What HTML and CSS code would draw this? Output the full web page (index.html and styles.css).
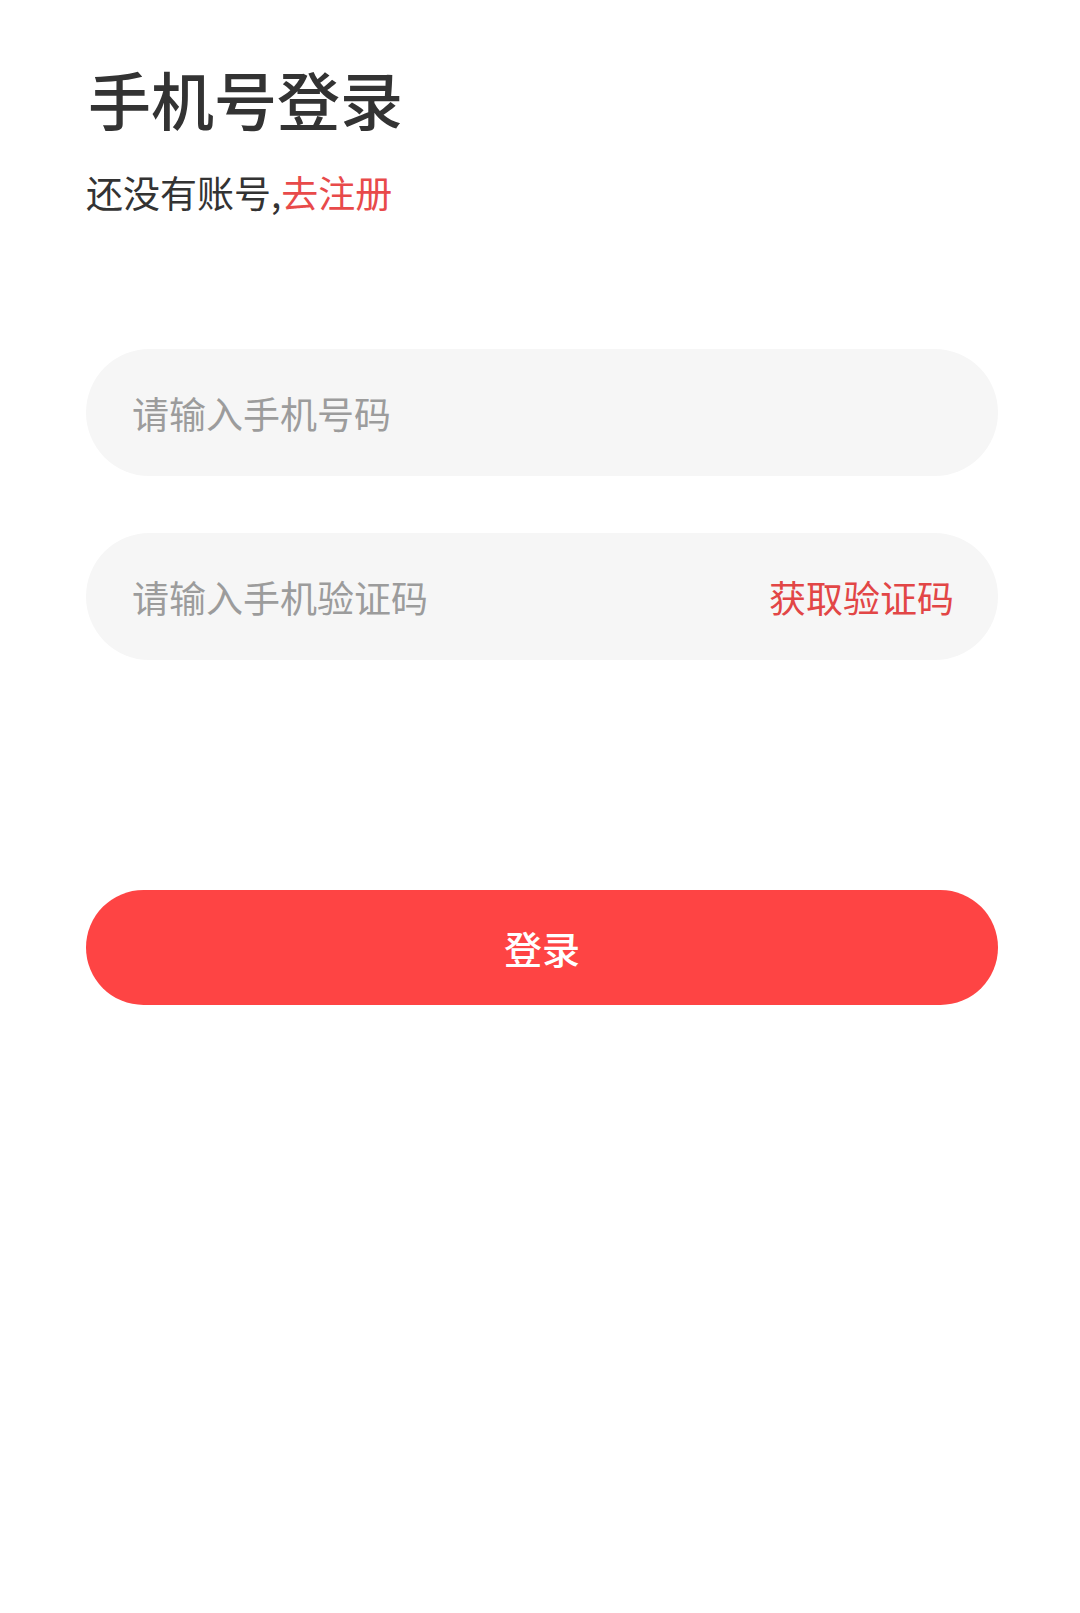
FILE: index.html
```html
<!DOCTYPE html>
<html lang="zh-CN">
<head>
<meta charset="utf-8">
<title>手机号登录</title>
<link rel="stylesheet" href="styles.css">
</head>
<body>
<main class="page">
  <h1 class="title">手机号登录</h1>
  <p class="subtitle">还没有账号,<a class="link" href="#">去注册</a></p>
  <form class="form">
    <div class="field"><span class="placeholder">请输入手机号码</span></div>
    <div class="field"><span class="placeholder">请输入手机验证码</span><span class="code-btn">获取验证码</span></div>
    <div class="submit">登录</div>
  </form>
</main>
</body>
</html>
```
FILE: styles.css
```css
html, body {
  margin: 0;
  padding: 0;
  background: #ffffff;
}
body {
  font-family: "Noto Sans CJK SC", "Noto Sans", sans-serif;
  width: 1080px;
  height: 1613px;
}
.page {
  padding: 0 82px 0 86px;
}
.title {
  margin: 0;
  padding-top: 62px;
  font-size: 63px;
  line-height: 72px;
  font-weight: 500;
  color: #333333;
  padding-left: 2px;
}
.subtitle {
  margin: 34px 0 0 0;
  font-size: 37px;
  line-height: 48px;
  color: #333333;
}
.link {
  color: #e84a4a;
  text-decoration: none;
}
.form {
  margin-top: 133px;
  display: flex;
  flex-direction: column;
}
.field {
  height: 127px;
  border-radius: 64px;
  background: #f6f6f6;
  display: flex;
  align-items: center;
  justify-content: space-between;
  padding: 0 44px 0 46px;
  margin-bottom: 57px;
}
.placeholder {
  font-size: 37px;
  color: #9c9c9c;
}
.code-btn {
  font-size: 37px;
  color: #e24646;
}
.submit {
  margin-top: 173px;
  height: 115px;
  border-radius: 58px;
  background: #fe4444;
  color: #ffffff;
  font-size: 38px;
  font-weight: 500;
  display: flex;
  align-items: center;
  justify-content: center;
}
```
